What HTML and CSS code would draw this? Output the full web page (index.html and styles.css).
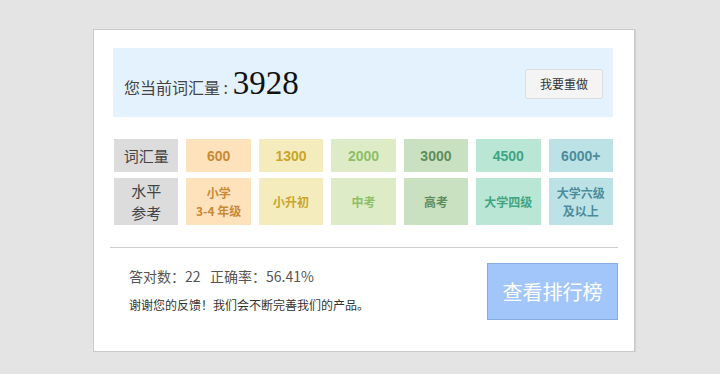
FILE: index.html
```html
<!DOCTYPE html>
<html lang="zh-CN">
<head>
  <meta charset="UTF-8"/>
  <title>词汇量测试结果</title>
  <link rel="stylesheet" href="styles.css">
</head>
<body>
  <div class="card">
    <div class="result-bar">
      <div class="result-text">您当前词汇量 : <span class="result-num">3928</span></div>
      <button class="redo-btn">我要重做</button>
    </div>

    <div class="level-table">
      <div class="cell head">词汇量</div>
      <div class="cell c1 num">600</div>
      <div class="cell c2 num">1300</div>
      <div class="cell c3 num">2000</div>
      <div class="cell c4 num">3000</div>
      <div class="cell c5 num">4500</div>
      <div class="cell c6 num">6000+</div>

      <div class="cell head tall">水平<br>参考</div>
      <div class="cell c1 tall lvl">小学<br>3-4 年级</div>
      <div class="cell c2 tall lvl">小升初</div>
      <div class="cell c3 tall lvl">中考</div>
      <div class="cell c4 tall lvl">高考</div>
      <div class="cell c5 tall lvl">大学四级</div>
      <div class="cell c6 tall lvl">大学六级<br>及以上</div>
    </div>

    <hr class="divider">

    <div class="footer">
      <div class="stats">
        <p class="score">答对数：22&nbsp;&nbsp;&nbsp;正确率：56.41%</p>
        <p class="thanks">谢谢您的反馈！我们会不断完善我们的产品。</p>
      </div>
      <button class="rank-btn">查看排行榜</button>
    </div>
  </div>
</body>
</html>
```

FILE: styles.css
```css
* {
  box-sizing: border-box;
  margin: 0;
  padding: 0;
}

body {
  background: #e4e4e4;
  font-family: "Liberation Sans", "Noto Sans CJK SC", sans-serif;
  color: #333;
}

.card {
  width: 542px;
  height: 323px;
  margin: 29px 0 0 93px;
  background: #fff;
  border: 1px solid #c9c9c9;
  box-shadow: 1px 1px 1px rgba(0,0,0,0.08);
  padding-top: 18px;
}

/* Result bar */
.result-bar {
  margin: 0 21px 0 19px;
  height: 69px;
  background: #e3f2fd;
  display: flex;
  align-items: center;
  justify-content: space-between;
  padding: 0 10px 0 11px;
}
.result-text {
  font-family: "Noto Sans CJK SC", sans-serif;
  font-size: 16px;
  color: #444;
  display: flex;
  align-items: baseline;
  white-space: pre;
  padding-top: 2px;
}
.result-num {
  font-family: "Liberation Serif", serif;
  font-size: 33px;
  color: #111;
  margin-left: 1px;
}
.redo-btn {
  width: 78px;
  height: 30px;
  margin-top: 2px;
  background: #f4f4f4;
  border: 1px solid #ddd;
  border-radius: 3px;
  font-family: "Noto Sans CJK SC", sans-serif;
  font-size: 12px;
  color: #333;
}

/* Level table */
.level-table {
  margin: 22px 21px 0 20px;
  display: grid;
  grid-template-columns: repeat(7, 1fr);
  grid-template-rows: 33px 47px;
  column-gap: 8px;
  row-gap: 6px;
}
.cell {
  display: flex;
  align-items: center;
  justify-content: center;
  text-align: center;
  font-family: "Noto Sans CJK SC", sans-serif;
}
.head {
  background: #dcdcdc;
  color: #444;
  font-size: 15px;
  line-height: 22px;
}
.num {
  font-family: "Liberation Sans", sans-serif;
  font-weight: bold;
  font-size: 14px;
}
.lvl {
  font-weight: bold;
  font-size: 12px;
  line-height: 18px;
}
.c1 { background: #fde2bb; color: #c98a35; }
.c2 { background: #f4ecbd; color: #c9a52b; }
.c3 { background: #ddecc6; color: #8dbf69; }
.c4 { background: #c9e1c1; color: #5e8d5d; }
.c5 { background: #b9e6d5; color: #3fa583; }
.c6 { background: #bce2e6; color: #4c8c9b; }

/* Divider */
.divider {
  border: none;
  border-top: 1px solid #cfcfcf;
  margin: 22px 16px 0 16px;
}

/* Footer */
.footer {
  display: flex;
  justify-content: space-between;
  margin: 15px 16px 0 35px;
}
.stats {
  font-family: "Noto Sans CJK SC", sans-serif;
  padding-top: 2px;
}
.score {
  font-size: 14px;
  color: #555;
  line-height: 22px;
}
.thanks {
  font-size: 12px;
  color: #333;
  margin-top: 9px;
  line-height: 18px;
}
.rank-btn {
  width: 131px;
  height: 57px;
  background: #a2c6f9;
  border: 1px solid #86ace4;
  color: #fff;
  font-family: "Noto Sans CJK SC", sans-serif;
  font-size: 20px;
}
```
